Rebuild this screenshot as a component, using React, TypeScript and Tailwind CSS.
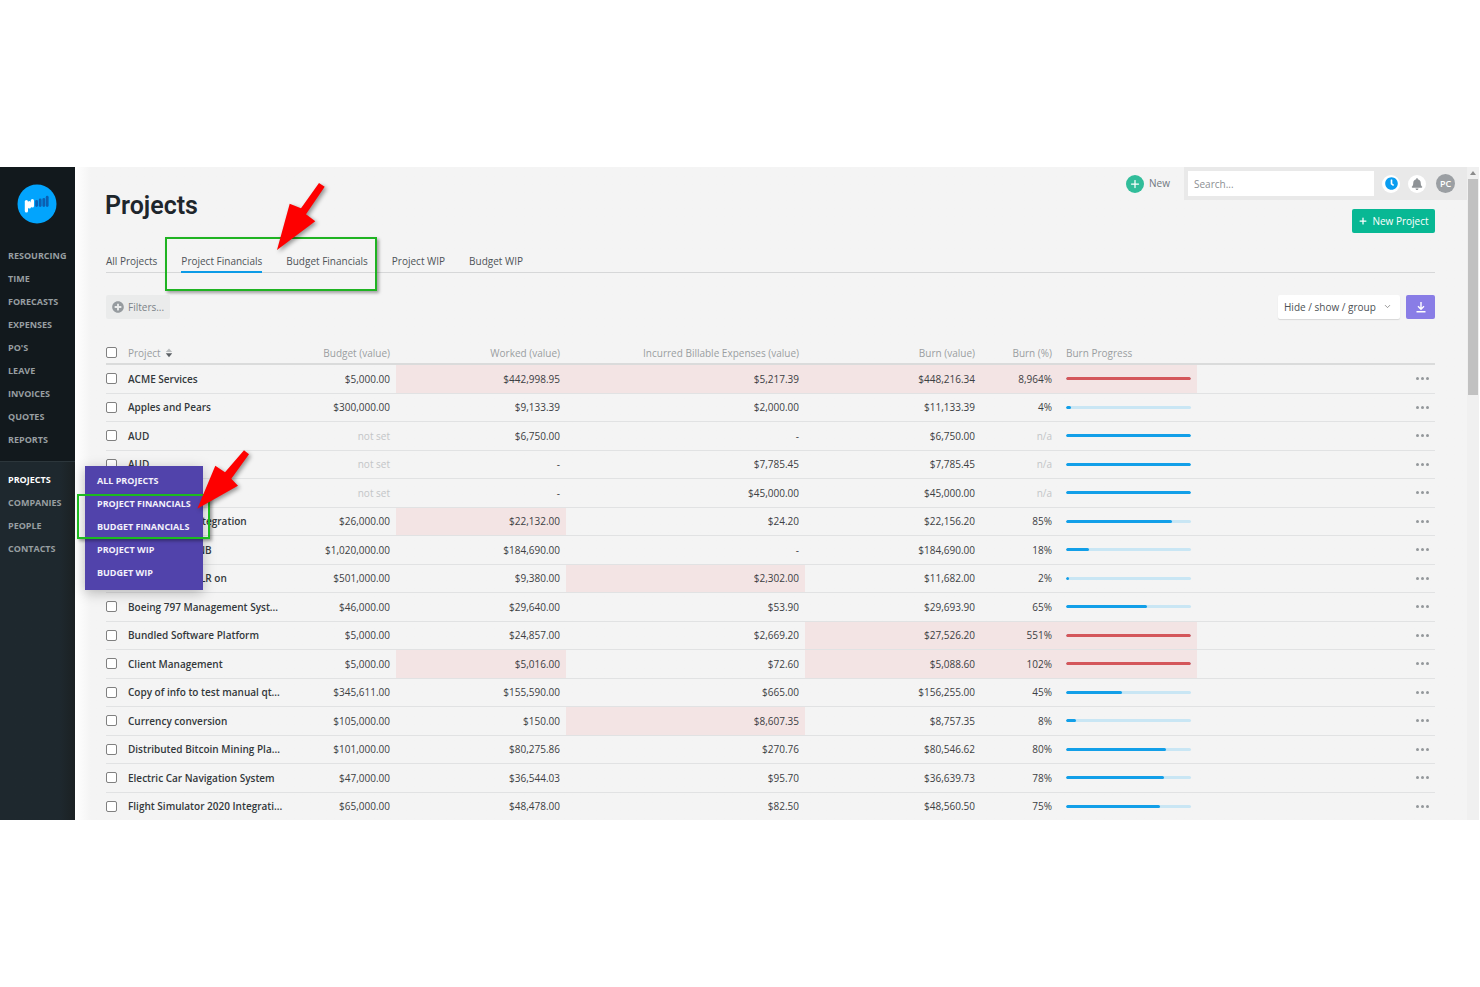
import React from "react";
import { FaBell, FaClock, FaPlusCircle } from "react-icons/fa";
import { ChevronDown, Plus } from "lucide-react";

type Row = {
  name: string;
  budget: string;
  worked: string;
  expenses: string;
  burn: string;
  pct: string;
  progress: number;
  over?: ("worked" | "expenses" | "burn")[];
};

const rows: Row[] = [
  { name: "ACME Services", budget: "$5,000.00", worked: "$442,998.95", expenses: "$5,217.39", burn: "$448,216.34", pct: "8,964%", progress: 100, over: ["worked", "expenses", "burn"] },
  { name: "Apples and Pears", budget: "$300,000.00", worked: "$9,133.39", expenses: "$2,000.00", burn: "$11,133.39", pct: "4%", progress: 4 },
  { name: "AUD", budget: "not set", worked: "$6,750.00", expenses: "-", burn: "$6,750.00", pct: "n/a", progress: 100 },
  { name: "AUD", budget: "not set", worked: "-", expenses: "$7,785.45", burn: "$7,785.45", pct: "n/a", progress: 100 },
  { name: "", budget: "not set", worked: "-", expenses: "$45,000.00", burn: "$45,000.00", pct: "n/a", progress: 100 },
  { name: "Bank System Integration", budget: "$26,000.00", worked: "$22,132.00", expenses: "$24.20", burn: "$22,156.20", pct: "85%", progress: 85, over: ["worked"] },
  { name: "Banking App - NB", budget: "$1,020,000.00", worked: "$184,690.00", expenses: "-", burn: "$184,690.00", pct: "18%", progress: 18 },
  { name: "Booking with XLR on", budget: "$501,000.00", worked: "$9,380.00", expenses: "$2,302.00", burn: "$11,682.00", pct: "2%", progress: 2, over: ["expenses"] },
  { name: "Boeing 797 Management Syst...", budget: "$46,000.00", worked: "$29,640.00", expenses: "$53.90", burn: "$29,693.90", pct: "65%", progress: 65 },
  { name: "Bundled Software Platform", budget: "$5,000.00", worked: "$24,857.00", expenses: "$2,669.20", burn: "$27,526.20", pct: "551%", progress: 100, over: ["burn"] },
  { name: "Client Management", budget: "$5,000.00", worked: "$5,016.00", expenses: "$72.60", burn: "$5,088.60", pct: "102%", progress: 100, over: ["worked", "burn"] },
  { name: "Copy of info to test manual qt...", budget: "$345,611.00", worked: "$155,590.00", expenses: "$665.00", burn: "$156,255.00", pct: "45%", progress: 45 },
  { name: "Currency conversion", budget: "$105,000.00", worked: "$150.00", expenses: "$8,607.35", burn: "$8,757.35", pct: "8%", progress: 8, over: ["expenses"] },
  { name: "Distributed Bitcoin Mining Pla...", budget: "$101,000.00", worked: "$80,275.86", expenses: "$270.76", burn: "$80,546.62", pct: "80%", progress: 80 },
  { name: "Electric Car Navigation System", budget: "$47,000.00", worked: "$36,544.03", expenses: "$95.70", burn: "$36,639.73", pct: "78%", progress: 78 },
  { name: "Flight Simulator 2020 Integrati...", budget: "$65,000.00", worked: "$48,478.00", expenses: "$82.50", burn: "$48,560.50", pct: "75%", progress: 75 },
];

const primaryNav = ["Resourcing", "Time", "Forecasts", "Expenses", "PO's", "Leave", "Invoices", "Quotes", "Reports"];
const secondaryNav = ["Projects", "Companies", "People", "Contacts"];
const views = ["All Projects", "Project Financials", "Budget Financials", "Project WIP", "Budget WIP"];

function Logo() {
  return (
    <svg viewBox="0 0 40 40" className="size-10" role="img" aria-label="Home">
      <circle cx="20" cy="20" r="19.5" fill="#02a4fd" />
      <g strokeLinecap="round" fill="none">
        <g stroke="#fff" strokeWidth="3.2">
          <path d="M9.400 17.500v9.500" />
          <path d="M12.400 18.500v4.500" />
          <path d="M15.400 16.500v5.500" />
        </g>
        <g stroke="#0b5fb2" strokeWidth="2.800">
          <path d="M19.600 17.500v4" />
          <path d="M23.200 16v5.500" />
          <path d="M26.800 15.500v6" />
          <path d="M30.200 13.200v8.300" />
        </g>
      </g>
    </svg>
  );
}

function Sidebar() {
  return (
    <aside className="relative z-20 flex w-[75px] shrink-0 flex-col bg-linear-to-r from-[#1e282e] from-80% to-[#1b2123] text-[9px] leading-[23px] font-bold text-[#979ea1] uppercase">
      <div className="border-b border-[#2c363b] bg-[#12191d] pb-2.5">
        <a href="#home" className="mt-[17px] mb-5 ml-[17px] block w-10">
          <Logo />
        </a>
        <nav aria-label="Main">
          {primaryNav.map((item) => (
            <a key={item} href="#main" className="block pl-2 whitespace-nowrap">{item}</a>
          ))}
        </nav>
      </div>
      <nav aria-label="Records" className="pt-1.5">
        {secondaryNav.map((item) => (
          <div key={item} className="relative">
            <a href="#records" className={item === "Projects" ? "block pl-2 text-white" : "block pl-2"}>{item}</a>
            {item === "Projects" && (
              <div className="absolute -top-0.5 left-[85px] w-[118px] bg-[#5143ab] pt-[3px] pb-1.5 text-[#f3f1fb] shadow-[0_3px_12px_rgba(0,0,0,0.25)]">
                {views.map((view) => (
                  <a key={view} href="#view" className="block pl-3 whitespace-nowrap">{view}</a>
                ))}
                <div className="pointer-events-none absolute top-7 -left-2 h-[45px] w-[133px] border-2 border-[#1cba1f] shadow-[2px_2px_3px_rgba(0,0,0,0.35)]" />
              </div>
            )}
          </div>
        ))}
      </nav>
    </aside>
  );
}

function Header() {
  return (
    <header className="flex justify-between pl-[30px]">
      <h1 className="pt-[23px] font-[Roboto] text-[25px] leading-[32px] font-semibold text-[#1e262c]">Projects</h1>
      <div className="flex flex-col items-end gap-[9px]">
        <div className="flex h-[33px] items-center text-[#6f7780]">
          <button className="mr-3.5 flex items-center gap-[5px] text-[10px]">
            <span className="flex size-[18px] items-center justify-center rounded-full bg-[#31bd9a] text-white">
              <Plus size={12} strokeWidth={2.5} />
            </span>
            New
          </button>
          <div className="flex h-full items-center bg-[#e9e9e9] pr-3 pl-1">
            <input aria-label="Search" placeholder="Search..." className="h-[25px] w-[186px] bg-white px-1.5 text-[10px] placeholder:text-[#8c8f93]" />
            <button aria-label="Timer" className="ml-2 flex size-[18px] items-center justify-center rounded-full bg-white text-[#0a9df0]">
              <FaClock size={13} />
            </button>
            <button aria-label="Notifications" className="ml-2 flex size-[18px] items-center justify-center rounded-full bg-white text-[#8e9296]">
              <FaBell size={12} />
            </button>
            <button className="ml-2.5 flex size-[19px] items-center justify-center rounded-full bg-[#9b9fa3] text-[9px] font-semibold text-white">PC</button>
          </div>
        </div>
        <button className="mr-8 flex h-6 w-[83px] items-center justify-center gap-1 rounded-xs bg-[#08b894] text-[10px] whitespace-nowrap text-white">
          <Plus size={10} strokeWidth={3} />
          New Project
        </button>
      </div>
    </header>
  );
}

function Tabs() {
  return (
    <nav aria-label="Views" className="relative mt-[19px] flex gap-6 border-b border-[#d6d7d8] text-[10px] leading-[18px] text-[#4e5357]">
      {views.map((view) => (
        <a
          key={view}
          href="#view"
          className={
            view === "Project Financials"
              ? "-mb-px border-b-2 border-[#0c9be6] pb-px whitespace-nowrap"
              : "pb-0.5 whitespace-nowrap"
          }
        >
          {view}
        </a>
      ))}
      <div className="pointer-events-none absolute -top-[15px] left-[59px] h-[54px] w-[212px] border-2 border-[#1fb322] shadow-[2px_2px_3px_rgba(0,0,0,0.35)]" />
    </nav>
  );
}

function ActionBar() {
  return (
    <div className="mt-[22px] flex h-6 items-stretch text-[10px]">
      <button className="flex items-center gap-1 rounded-xs bg-[#eaebeb] px-1.5 text-[#7c8288]">
        <FaPlusCircle size={12} className="text-[#969b9f]" />
        Filters...
      </button>
      <div className="relative ml-auto rounded-xs bg-white shadow-[0_1px_1px_rgba(0,0,0,0.12)]">
        <select aria-label="Columns" className="h-full w-[122px] appearance-none pl-1.5 text-[#4c5155]">
          <option>Hide / show / group</option>
        </select>
        <ChevronDown size={9} className="pointer-events-none absolute top-[7px] right-2 text-[#777]" />
      </div>
      <button aria-label="Download" className="ml-1.5 flex w-[29px] items-center justify-center rounded-xs bg-[#897de6] text-white">
        <svg viewBox="0 0 12 12" className="size-3" fill="none" stroke="currentColor" strokeWidth="1.4">
          <path d="M6 1v7M3 5.2l3 3 3-3M1.5 10.7h9" />
        </svg>
      </button>
    </div>
  );
}

function Tick({ label }: { label: string }) {
  return (
    <input
      type="checkbox"
      aria-label={label}
      className="block size-[11px] appearance-none rounded-xs border border-[#808080] bg-white"
    />
  );
}

function ProjectTable() {
  const red = "bg-[#f3e4e4] px-1.5";
  const plain = "px-1.5";
  return (
    <table className="mt-[23px] w-full table-fixed border-collapse text-right text-[10px] leading-4 text-[#3c4043]">
      <colgroup>
        <col className="w-4" />
        <col className="w-[174px]" />
        <col className="w-[100px]" />
        <col className="w-[170px]" />
        <col className="w-[239px]" />
        <col className="w-[176px]" />
        <col className="w-[77px]" />
        <col className="w-[139px]" />
        <col />
      </colgroup>
      <thead>
        <tr className="h-[22px] border-b-2 border-[#dadbdb] whitespace-nowrap text-[#9a9ea1] *:font-normal">
          <th className="p-0"><Tick label="Select all" /></th>
          <th className="px-1.5 text-left">
            <span className="flex items-center gap-1">
              Project
              <svg viewBox="0 0 8 10" className="h-2.5 w-2">
                <path d="M4 0.5L7.2 4H0.8Z" fill="#b9bcbe" />
                <path d="M0.8 5.2H7.2L4 9.2Z" fill="#5c6165" />
              </svg>
            </span>
          </th>
          <th className={plain}>Budget (value)</th>
          <th className={plain}>Worked (value)</th>
          <th className={plain}>Incurred Billable Expenses (value)</th>
          <th className={plain}>Burn (value)</th>
          <th className={plain}>Burn (%)</th>
          <th className="pl-2 text-left">Burn Progress</th>
          <th aria-label="Actions" />
        </tr>
      </thead>
      <tbody>
        {rows.map((row, i) => {
          const over = row.over ?? [];
          const burnOver = over.includes("burn");
          return (
            <tr key={i} className="border-b border-[#e1e2e3] odd:h-[29px] even:h-7 last:h-7 last:border-0">
              <td className="p-0"><Tick label={row.name || "Project"} /></td>
              <td className="px-1.5 text-left font-semibold whitespace-nowrap text-[#33383b]">{row.name}</td>
              <td className={row.budget === "not set" ? "px-1.5 text-[#c3c5c7]" : plain}>{row.budget}</td>
              <td className={over.includes("worked") ? red : plain}>{row.worked}</td>
              <td className={over.includes("expenses") ? red : plain}>{row.expenses}</td>
              <td className={burnOver ? red : plain}>{row.burn}</td>
              <td className={burnOver ? red : row.pct === "n/a" ? "px-1.5 text-[#c3c5c7]" : plain}>{row.pct}</td>
              <td className={burnOver ? "bg-[#f3e4e4] pr-1.5 pl-2" : "pr-1.5 pl-2"}>
                <div className="h-[3px] overflow-hidden rounded-full bg-[#c9e6f4]">
                  <div
                    className={burnOver ? "h-full rounded-full bg-[#d4565a]" : "h-full rounded-full bg-[#129fe8]"}
                    style={{ width: `${row.progress}%` }}
                  />
                </div>
              </td>
              <td>
                <button aria-label={`Actions for ${row.name}`} className="mr-1.5 ml-auto flex gap-0.5">
                  <span className="size-[3px] rounded-full bg-[#94989b]" />
                  <span className="size-[3px] rounded-full bg-[#94989b]" />
                  <span className="size-[3px] rounded-full bg-[#94989b]" />
                </button>
              </td>
            </tr>
          );
        })}
      </tbody>
    </table>
  );
}

function Scrollbar() {
  return (
    <div className="flex w-3 shrink-0 flex-col items-center bg-[#f0f0f0]">
      <svg viewBox="0 0 12 12" className="size-3">
        <path d="M6 4L9 8H3Z" fill="#8b8b8b" />
      </svg>
      <div className="h-[216px] w-2.5 bg-[#c1c1c1]" />
    </div>
  );
}

function Arrows() {
  return (
    <svg
      viewBox="0 0 400 400"
      className="pointer-events-none absolute top-0 left-0 z-30 size-[400px] drop-shadow-[2px_2px_2px_rgba(0,0,0,0.4)]"
      fill="#fe0000"
      aria-hidden="true"
    >
      <path d="M319 16L324.700 19.700L306 47.300L315.300 54.300L277 83L289.700 36.700L301 41.300Z" />
      <path d="M244 283.300L249 287.300L231.300 311.700L238 318.700L197.300 341.700L215.300 298.700L225 305.300Z" />
    </svg>
  );
}

export default function App() {
  return (
    <div className="min-h-screen bg-white py-[167px] font-['Open_Sans',sans-serif]">
      <div className="relative mr-px flex overflow-hidden bg-[#f4f4f4]">
        <Sidebar />
        <main className="min-w-0 grow bg-linear-to-r from-white to-[#f4f4f4] to-[16px]">
          <Header />
          <div className="pr-8 pl-[31px]">
            <Tabs />
            <ActionBar />
            <ProjectTable />
          </div>
        </main>
        <Scrollbar />
        <Arrows />
      </div>
    </div>
  );
}
